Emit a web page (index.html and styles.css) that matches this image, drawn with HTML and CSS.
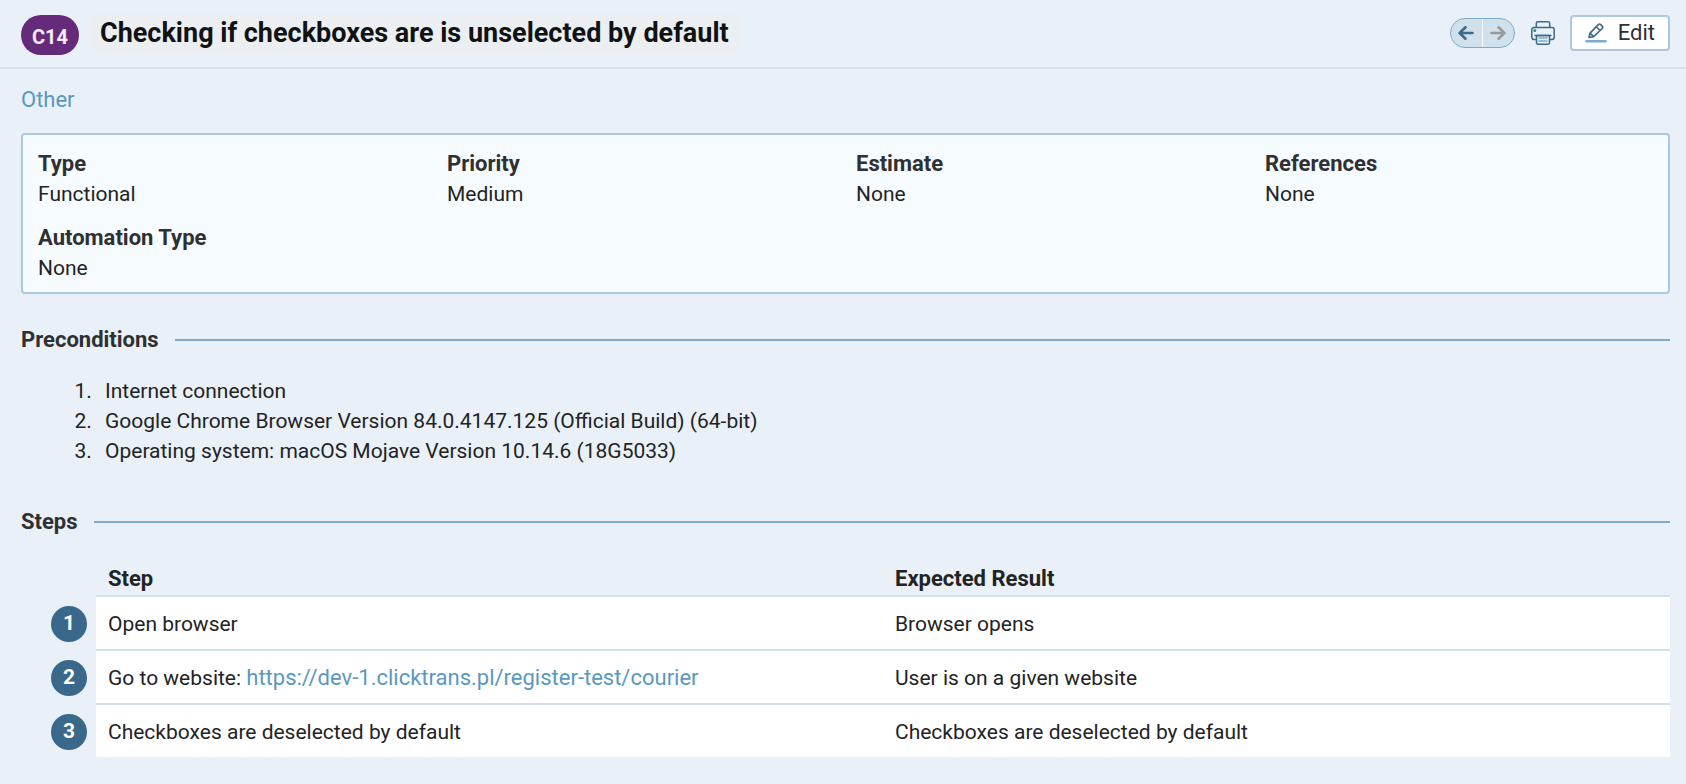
FILE: index.html
```html
<!DOCTYPE html>
<html lang="en">
<head>
<meta charset="utf-8">
<title>Checking if checkboxes are is unselected by default</title>
<link rel="stylesheet" href="styles.css">
</head>
<body>
<header class="header">
  <span class="badge">C14</span>
  <h1 class="title">Checking if checkboxes are is unselected by default</h1>
  <div class="toolbar">
    <div class="pager">
      <button class="pager-button" type="button" aria-label="Previous">
        <svg width="16" height="14" viewBox="0 0 16 14" fill="none" stroke="#3d6a8c" stroke-width="2.6" stroke-linecap="round" stroke-linejoin="round"><path d="M14.5 7H1.8M7.5 1.3 1.6 7l5.9 5.7"/></svg>
      </button>
      <button class="pager-button pager-next" type="button" aria-label="Next">
        <svg width="16" height="14" viewBox="0 0 16 14" fill="none" stroke="#999a9c" stroke-width="2.6" stroke-linecap="round" stroke-linejoin="round"><path d="M1.5 7h12.7M8.5 1.3 14.4 7l-5.9 5.7"/></svg>
      </button>
    </div>
    <button class="print" type="button" aria-label="Print">
      <svg width="24" height="24" viewBox="0 0 24 24" fill="none" stroke="#3d6a8c" stroke-width="1.5" stroke-linejoin="round"><path d="M5.5 18.5H3a2.2 2.2 0 0 1-2.2-2.2V8.7A2.2 2.2 0 0 1 3 6.5h18a2.2 2.2 0 0 1 2.2 2.2v7.6a2.2 2.2 0 0 1-2.2 2.2h-2.5"/><path d="M5.3 6.5V2.3A1.5 1.5 0 0 1 6.8.8h10.4a1.5 1.5 0 0 1 1.5 1.5v4.2M3.500 14.600h17"/><path d="M5.500 14.600h13v7.200a1.400 1.400 0 0 1-1.400 1.400H6.900a1.400 1.400 0 0 1-1.400-1.400z"/><path d="M7.500 17h9M7.500 20h9" stroke="#7cadd0"/><circle cx="3.800" cy="9.600" r="1.500" fill="#1d9d7c" stroke="none"/></svg>
    </button>
    <button class="edit" type="button">
      <svg width="22" height="20" viewBox="0 0 22 20" fill="none" stroke="#3d6a8c" stroke-width="1.6" stroke-linejoin="round"><path d="M4 14.500 5 10.100 13.300 1.600a1.700 1.700 0 0 1 2.400 0l1.500 1.500a1.700 1.700 0 0 1 0 2.400L8.700 13.600zM11.300 3.700l3.800 3.800M5 10.100l3.700 3.500"/><path d="M1.500 18.200h19" stroke="#7cadd0" stroke-width="2.600" stroke-linecap="round"/></svg>
      Edit
    </button>
  </div>
</header>
<main class="content">
  <a class="link section-link" href="#">Other</a>
  <dl class="card">
    <div><dt>Type</dt><dd>Functional</dd></div>
    <div><dt>Priority</dt><dd>Medium</dd></div>
    <div><dt>Estimate</dt><dd>None</dd></div>
    <div><dt>References</dt><dd>None</dd></div>
    <div><dt>Automation Type</dt><dd>None</dd></div>
  </dl>
  <h2 class="heading">Preconditions</h2>
  <ol class="preconditions">
    <li>Internet connection</li>
    <li>Google Chrome Browser Version 84.0.4147.125 (Official Build) (64-bit)</li>
    <li>Operating system: macOS Mojave Version 10.14.6 (18G5033)</li>
  </ol>
  <h2 class="heading">Steps</h2>
  <table class="steps">
    <thead>
      <tr><td class="number-cell"></td><th scope="col">Step</th><th scope="col">Expected Result</th></tr>
    </thead>
    <tbody>
      <tr><td class="number-cell"><span class="number">1</span></td><td>Open browser</td><td>Browser opens</td></tr>
      <tr><td class="number-cell"><span class="number">2</span></td><td>Go to website: <a class="link" href="#">https://dev-1.clicktrans.pl/register-test/courier</a></td><td>User is on a given website</td></tr>
      <tr><td class="number-cell"><span class="number">3</span></td><td>Checkboxes are deselected by default</td><td>Checkboxes are deselected by default</td></tr>
    </tbody>
  </table>
</main>
</body>
</html>
```

FILE: styles.css
```css
* {
  box-sizing: border-box;
}

body {
  margin: 0;
  background: #e9f0f7;
  color: #222325;
  font: 21px/30px Roboto, "Liberation Sans", sans-serif;
}

button {
  margin: 0;
  padding: 0;
  border: 0;
  background: none;
  color: #2f3033;
  font: inherit;
  cursor: pointer;
}

svg {
  display: block;
}

.link {
  color: #5a98c0;
  font-size: 22px;
  text-decoration: none;
}

.header {
  display: flex;
  align-items: flex-start;
  padding: 13px 16px 12px 21px;
  border-bottom: 2px solid #d0e1eb;
}

.badge {
  width: 58px;
  height: 40px;
  margin-top: 2px;
  border-radius: 20px;
  background: #662a7a;
  color: #f3ebf7;
  font-size: 20px;
  font-weight: 700;
  line-height: 44px;
  text-align: center;
}

.title {
  margin: 0 0 0 11px;
  padding: 1px 10px 0;
  background: #ebeff2;
  color: #111214;
  font-size: 27px;
  font-weight: 700;
  line-height: 39px;
}

.toolbar {
  display: flex;
  align-items: center;
  margin: 2px 0 0 auto;
}

.pager {
  display: flex;
  width: 65px;
  height: 30px;
  overflow: hidden;
  border: 1px solid #7cadd0;
  border-radius: 15px;
  background: #d0e1eb;
}

.pager-button {
  display: flex;
  flex: 1;
  align-items: center;
  justify-content: center;
}

.pager-next {
  border-left: 1px solid #f6fbff;
}

.print {
  margin: 0 15px 0 16px;
}

.edit {
  display: flex;
  align-items: center;
  gap: 11px;
  height: 36px;
  padding: 0 13px;
  border: 2px solid #adc8dd;
  border-radius: 4px;
  background: #fff;
  font-size: 22px;
}

.content {
  padding: 16px 16px 26px 21px;
}

.section-link {
  display: block;
  width: fit-content;
}

.card {
  display: grid;
  grid-template-columns: repeat(4, 1fr);
  gap: 14px 6px;
  margin: 18px 0 31px;
  padding: 14px 0 9px 15px;
  border: 2px solid #adc8dd;
  border-radius: 4px;
  background: #f6fbff;
}

.card dt {
  color: #2f3033;
  font-size: 22px;
  font-weight: 700;
}

.card dd {
  margin: 0;
}

.heading {
  display: flex;
  align-items: center;
  gap: 16px;
  margin: 0;
  color: #2f3033;
  font-size: 22px;
  font-weight: 700;
  line-height: 30px;
}

.heading::after {
  flex: 1;
  height: 2px;
  background: #7cadd0;
  content: "";
}

.preconditions {
  margin: 21px 0 41px;
  padding-left: 76px;
}

.preconditions li {
  padding-left: 8px;
}

.steps {
  width: 100%;
  margin-top: 27px;
  border-collapse: separate;
  border-spacing: 0;
  table-layout: fixed;
}

.steps th {
  padding: 0 12px 1px;
  font-size: 22px;
  text-align: left;
}

.steps td {
  padding: 12px 12px 10px;
  border-top: 2px solid #d0e1eb;
  background: #fff;
}

.steps .number-cell {
  width: 75px;
  padding: 2px 0 0 30px;
  border-top-color: transparent;
  background: none;
}

.number {
  display: block;
  width: 36px;
  height: 36px;
  border-radius: 50%;
  background: #3a688a;
  color: #fff;
  font-weight: 700;
  line-height: 34px;
  text-align: center;
}
```
